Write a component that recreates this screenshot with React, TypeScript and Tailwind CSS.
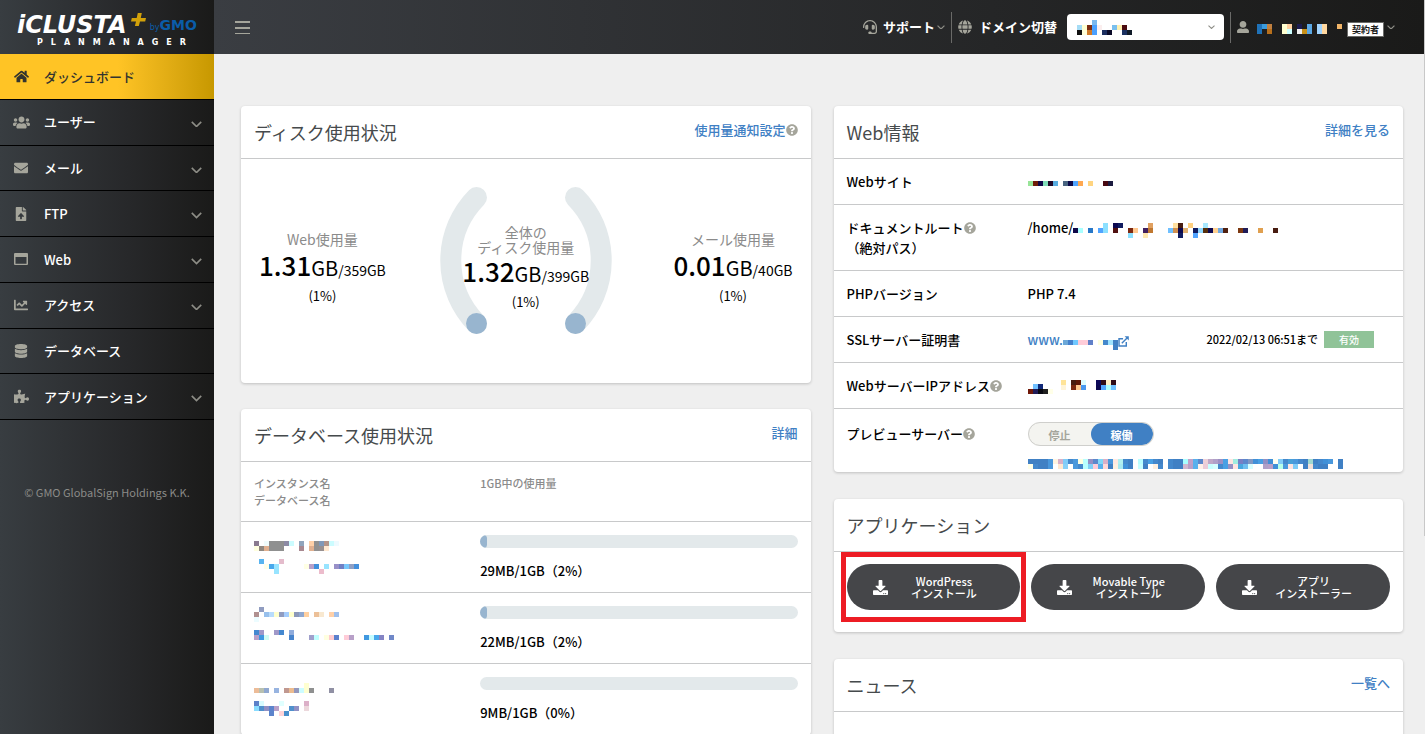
import { useState, type ReactNode } from 'react';
import type { IconType } from 'react-icons';
import {
  FaChartLine,
  FaDatabase,
  FaDownload,
  FaEnvelope,
  FaFileUpload,
  FaGlobe,
  FaHeadset,
  FaHome,
  FaPuzzlePiece,
  FaQuestionCircle,
  FaUserAlt,
  FaUsers,
} from 'react-icons/fa';

const CELL = 5;

// Masked value: each row is a list of hex colours, "-" leaves the cell empty
function Mosaic({ rows, className = '' }: { rows: string[]; className?: string }) {
  const grid = rows.map((row) => row.split(' '));
  const cols = Math.max(...grid.map((row) => row.length));

  return (
    <svg
      width={cols * CELL}
      height={grid.length * CELL}
      shapeRendering="crispEdges"
      className={`block shrink-0 ${className}`}
      aria-hidden="true"
    >
      {grid.map((row, y) =>
        row.map((color, x) =>
          color === '-' ? null : (
            <rect
              key={`${x}-${y}`}
              x={x * CELL}
              y={y * CELL}
              width={CELL}
              height={CELL}
              fill={`#${color}`}
            />
          )
        )
      )}
    </svg>
  );
}

function Chevron({ className = '' }: { className?: string }) {
  return (
    <svg
      viewBox="0 0 10 6"
      fill="none"
      stroke="currentColor"
      strokeWidth="1.5"
      className={`shrink-0 text-[#8d8d86] ${className}`}
      aria-hidden="true"
    >
      <path d="M0.7 0.8 L5 5 L9.3 0.8" />
    </svg>
  );
}

function WindowIcon({ className = '' }: { className?: string }) {
  return (
    <svg viewBox="0 0 14 12" className={className} fill="currentColor" aria-hidden="true">
      <path
        fillRule="evenodd"
        d="M1 0h12a1 1 0 0 1 1 1v10a1 1 0 0 1-1 1H1a1 1 0 0 1-1-1V1a1 1 0 0 1 1-1zm0.5 4v6.7h11V4z"
      />
    </svg>
  );
}

function ExternalIcon() {
  return (
    <svg
      width="11"
      height="11"
      viewBox="0 0 13 13"
      fill="none"
      stroke="currentColor"
      strokeWidth="1.7"
      className="shrink-0"
      aria-hidden="true"
    >
      <path d="M6 3.2H1.2v8.6h8.6V7" />
      <path d="M4.5 8.5 L11 2" />
      <path d="M7.8 0.2H12.8V5.2z" fill="currentColor" stroke="none" />
    </svg>
  );
}

function Help() {
  return <FaQuestionCircle className="size-3 shrink-0 text-[#a5a59b]" />;
}

function Logo() {
  return (
    <a href="#" className="flex h-[54px] shrink-0 flex-col pt-[13px] pl-[17px] text-white">
      <span className="flex h-6 items-end">
        <span className="font-['DejaVu_Sans'] text-[24px] leading-6 font-bold italic">
          iCLUSTA
        </span>
        <svg
          width="15"
          height="14"
          viewBox="0 0 15 14"
          className="mb-[10px] ml-1 shrink-0"
          aria-hidden="true"
        >
          <path d="M6.8 0h4l-1 5H15l-0.8 3.4H9L7.8 13H3.9l1.1-4.6H0L0.8 5h4.9z" fill="#d2a10a" />
        </svg>
        <span className="mb-[2px] ml-1 flex items-baseline font-['DejaVu_Sans'] text-[#0a5ca8]">
          <span className="text-[8px] leading-[14px]">by</span>
          <span className="text-[14px] leading-[14px] font-bold">GMO</span>
        </span>
      </span>
      <span className="mt-px mr-7 ml-5 flex justify-between font-['DejaVu_Sans'] text-[8px] leading-[10px] font-bold uppercase">
        {'PlanManager'.split('').map((letter, i) => (
          <span key={i}>{letter}</span>
        ))}
      </span>
    </a>
  );
}

type NavItem = {
  label: string;
  icon: IconType | typeof WindowIcon;
  iconClass: string;
  active?: boolean;
  expandable?: boolean;
};

const navItems: NavItem[] = [
  { label: 'ダッシュボード', icon: FaHome, iconClass: 'size-[15px]', active: true },
  { label: 'ユーザー', icon: FaUsers, iconClass: 'size-[17px]', expandable: true },
  { label: 'メール', icon: FaEnvelope, iconClass: 'size-[14px]', expandable: true },
  { label: 'FTP', icon: FaFileUpload, iconClass: 'size-[14px]', expandable: true },
  { label: 'Web', icon: WindowIcon, iconClass: 'h-3 w-[14px]', expandable: true },
  { label: 'アクセス', icon: FaChartLine, iconClass: 'size-[14px]', expandable: true },
  { label: 'データベース', icon: FaDatabase, iconClass: 'size-[14px]' },
  { label: 'アプリケーション', icon: FaPuzzlePiece, iconClass: 'size-[15px]', expandable: true },
];

function Sidebar() {
  return (
    <aside className="flex w-[214px] shrink-0 flex-col bg-linear-to-r from-[#383d41] via-[#27282a] via-60% to-[#1a1a19]">
      <Logo />
      <nav className="flex h-[366px] shrink-0 flex-col">
        {navItems.map(({ label, icon: Icon, iconClass, active, expandable }) => (
          <a
            key={label}
            href="#"
            className={`flex flex-1 items-center border-b border-black pr-3 text-[13px] font-medium ${
              active
                ? 'bg-linear-to-r from-[#ffc425] from-55% to-[#c79800] text-[#33342f]'
                : 'text-white'
            }`}
          >
            <span className="flex w-[42px] justify-center">
              <Icon className={`${iconClass} ${active ? '' : 'text-[#a5a59b]'}`} />
            </span>
            <span className="flex-1 pl-[2px]">{label}</span>
            {expandable && <Chevron className="mt-1 w-[11px]" />}
          </a>
        ))}
      </nav>
      <p className="mt-[63px] text-center text-[11px] leading-[18px] text-[#8b8b88]">
        © GMO GlobalSign Holdings K.K.
      </p>
    </aside>
  );
}

function TopBar() {
  return (
    <header className="flex h-[54px] shrink-0 items-center bg-linear-to-r from-[#3a3d42] to-[#1a1a19] pr-[29px] pl-[21px] text-[13px] font-bold text-white">
      <button aria-label="メニュー" className="flex flex-col gap-[4px]">
        <span className="h-[2px] w-[15px] bg-[#a5a59b]" />
        <span className="h-[2px] w-[15px] bg-[#a5a59b]" />
        <span className="h-px w-[15px] bg-[#a5a59b]" />
      </button>

      <button className="ml-auto flex items-center">
        <FaHeadset className="mr-[6px] size-[14px] text-[#a5a59b]" />
        サポート
        <Chevron className="ml-[2px] w-2" />
      </button>

      <div className="mx-[6px] h-[31px] w-px bg-[#6a6a68]" />

      <label htmlFor="domain" className="flex items-center">
        <FaGlobe className="mr-[7px] size-[14px] text-[#a5a59b]" />
        ドメイン切替
      </label>
      <div className="relative ml-[10px]">
        <select id="domain" className="block h-[26px] w-[157px] appearance-none rounded bg-white" />
        <Mosaic
          className="pointer-events-none absolute top-[6px] left-[10px]"
          rows={[
            '- - - 7ab8ee',
            'a5dcf5 ffffd0 7a2b10 4aa0ff fbeeee - - 7abfee fff0b0 4a0a10',
            '111111 ffffd8 d07a28 4aa0ff - 1c2e60 0a0a28 - - 1a3060 101a28',
          ]}
        />
        <Chevron className="pointer-events-none absolute top-[11px] right-[9px] w-[7px]" />
      </div>

      <div className="mx-[6px] h-[31px] w-px bg-[#6a6a68]" />

      <button className="flex items-center" aria-label="アカウント">
        <FaUserAlt className="mr-2 h-[14px] w-3 text-[#a5a59b]" />
        <Mosaic
          className="mt-1"
          rows={[
            '1f72b8 3a9bdc c08040 - - ffffd0 ffd0a0 - 1c1c50 - 5ba8e4 - a0d4ff ffd8a0 - - f0b468',
            '1f72b8 - b8701c - - ffffd0 ccffff - f0f0f0 c89018 5ba8e4 - a0d4ff ffd8a0',
          ]}
        />
        <span className="mt-1 mr-[3px] ml-[5px] border border-[#6a6a68] bg-white px-1 text-[9px] leading-[13px] text-[#1a1a19]">
          契約者
        </span>
        <Chevron className="w-2" />
      </button>
    </header>
  );
}

function Card({ title, action, children }: { title: string; action?: ReactNode; children?: ReactNode }) {
  return (
    <section className="rounded bg-white shadow-[0_1px_3px_rgba(0,0,0,0.2)]">
      <div className="flex h-[53px] items-center justify-between border-b border-[#c8c9ca] px-[13px]">
        <h2 className="text-[18px] text-[#464a4c]">{title}</h2>
        {action && (
          <div className="flex items-center pb-1 text-[13px] font-medium text-[#4080c4]">{action}</div>
        )}
      </div>
      {children}
    </section>
  );
}

function Usage({ label, used, total }: { label: ReactNode; used: string; total: string }) {
  return (
    <div className="text-center font-medium whitespace-nowrap text-black">
      <p className="text-[14px] font-normal text-[#8b8b8b]">{label}</p>
      <p className="leading-8">
        <span className="text-[26px]">{used}</span>
        <span className="text-[20px] font-normal">GB</span>
        <span className="text-[14px] font-normal">/{total}</span>
      </p>
      <p className="text-[13px] leading-5 font-normal">(1%)</p>
    </div>
  );
}

function DiskCard() {
  return (
    <Card
      title="ディスク使用状況"
      action={
        <>
          <a href="#">使用量通知設定</a>
          <Help />
        </>
      }
    >
      <div className="grid grid-cols-[1fr_172px_1fr] px-[18px] pt-7 pb-[49px]">
        <div className="flex justify-start pt-[42px] leading-5">
          <Usage label="Web使用量" used="1.31" total="359GB" />
        </div>
        <div className="grid justify-items-center">
          <svg
            width="172"
            height="147"
            viewBox="0 0 172 147"
            fill="none"
            strokeWidth="21"
            strokeLinecap="round"
            className="col-start-1 row-start-1"
            aria-hidden="true"
          >
            <path d="M36.5 10.5A90 90 0 0 0 36.5 136.5" stroke="#e3e9eb" />
            <path d="M135.5 10.5A90 90 0 0 1 135.5 136.5" stroke="#e3e9eb" />
            <circle cx="36.5" cy="136.5" r="10.5" fill="#98b5cf" />
            <circle cx="135.5" cy="136.5" r="10.5" fill="#98b5cf" />
          </svg>
          <div className="col-start-1 row-start-1 pt-[38px] leading-[15px]">
            <Usage
              label={
                <>
                  全体の
                  <br />
                  ディスク使用量
                </>
              }
              used="1.32"
              total="399GB"
            />
          </div>
        </div>
        <div className="flex justify-end pt-[42px] leading-5">
          <Usage label="メール使用量" used="0.01" total="40GB" />
        </div>
      </div>
    </Card>
  );
}

const databases = [
  {
    usage: '29MB/1GB（2%）',
    percent: 2,
    instance: [
      '8a7a90 - f0fcfc 8f9090 8f9090 8f9090 8c8aa4 ccfcff - 90a4bc - ffd0a8 909090 8098b8 b49488 ccfcff eefaff',
      'ffffe0 908880 e0b090 8f9090 8f9090 8f9090 - - - a88890 - e0b090 909090 989090 ffe8d0',
    ],
    name: [
      '- 58b4f0 - - - e4bccc',
      '- - ffffe8 48a8ec 98e4ff - - - - - ffffe4 b8a0c8 4090dc - 98e4ff - 9890c8 7080c4 78c8fc 90a0c4 4490dc',
      '- - - - 98e4ff - - - - - - - - ecbccc',
    ],
  },
  {
    usage: '22MB/1GB（2%）',
    percent: 2,
    instance: [
      '- 909cc0',
      'b09090 - 98c0ec b8dcfc ffffcc 909cc0 a4ccfc ffffcc 8c98b8 90a8d0 ffd0a0 - ecc098 f8e8d0 - ffd0a8 a0c0ec',
      'ecfcff',
    ],
    name: [
      '4488d0 a098c8 - - a098c8 4488d0 - 90acdc',
      'b8a0c8 4098e0 d0fcf4 - - - - 4884cc - - - a0a0cc c0ffff - ffffe0 ffccd0 5c80cc - ffccd8 b8a0c8 - - 4098e0 c4fcff 48a8ec 8484c4 - 7088c8',
    ],
  },
  {
    usage: '9MB/1GB（0%）',
    percent: 0,
    instance: [
      '- - - - - - - - - - ffffd0',
      'ecbc98 b8c0b0 90a8d0 - 98b4e0 - c09890 ecbc90 9498bc ccfcff ffffd0 8f9090 - - - 9090a4',
    ],
    name: [
      '5c80c8 d8fcff - - - e0ffff - - - - dcb0c8',
      '88dcff 5090cc 9090c4 5c84cc b8a0c8 - - 5090cc 9090c4 - ecd8dc',
      '- - - 5c84cc - ffd4d8 4890cc',
    ],
  },
];

function DatabaseCard() {
  return (
    <Card title="データベース使用状況" action={<a href="#">詳細</a>}>
      <table className="w-full text-left">
        <thead>
          <tr className="h-[59px] border-b border-[#c8c9ca] align-top text-[11px] leading-[17px] text-[#8b8b8b]">
            <th className="w-[42%] pt-[13px] pl-[13px] font-medium">
              インスタンス名
              <br />
              データベース名
            </th>
            <th className="pt-[13px] pr-[13px] font-medium">1GB中の使用量</th>
          </tr>
        </thead>
        <tbody>
          {databases.map((db) => (
            <tr key={db.usage} className="h-[71px] border-b border-[#c8c9ca] align-top">
              <td className="pt-[9px] pl-[13px]">
                <div className="flex flex-col gap-2">
                  <div className="flex h-5 items-end">
                    <Mosaic rows={db.instance} />
                  </div>
                  <Mosaic rows={db.name} />
                </div>
              </td>
              <td className="pt-[13px] pr-[13px]">
                <div className="h-[13px] overflow-hidden rounded-full bg-[#e3e9eb]">
                  <div className="h-full rounded-full bg-[#98b5cf]" style={{ width: `${db.percent}%` }} />
                </div>
                <p className="mt-[13px] text-[13px] leading-5 font-medium text-black">{db.usage}</p>
              </td>
            </tr>
          ))}
        </tbody>
      </table>
    </Card>
  );
}

function InfoRow({ label, children }: { label: ReactNode; children: ReactNode }) {
  return (
    <div className="flex border-b border-[#c8c9ca] pt-[13px] pb-3 text-[13px] leading-5 font-medium text-black">
      <dt className="w-[181px] shrink-0">{label}</dt>
      <dd className="flex flex-1 items-start">{children}</dd>
    </div>
  );
}

function PreviewToggle() {
  const [running, setRunning] = useState(true);
  const options = [
    { label: '停止', value: false },
    { label: '稼働', value: true },
  ];

  return (
    <fieldset
      className="flex h-6 w-[126px] overflow-hidden rounded-full border border-[#cfcfcc] bg-[#f4f4f0]"
      aria-label="プレビューサーバー"
    >
      {options.map(({ label, value }) => (
        <label
          key={label}
          className={`relative flex flex-1 cursor-pointer items-center justify-center rounded-full pt-[2px] text-[11px] font-bold ${
            running === value ? 'bg-[#4080c4] text-white' : 'text-[#a5a59b]'
          }`}
        >
          <input
            type="radio"
            name="preview"
            checked={running === value}
            onChange={() => setRunning(value)}
            className="sr-only"
          />
          {label}
        </label>
      ))}
    </fieldset>
  );
}

function WebCard() {
  return (
    <Card title="Web情報" action={<a href="#">詳細を見る</a>}>
      <dl className="[&>div]:pl-[13px]">
        <InfoRow label="Webサイト">
          <Mosaic
            className="mt-[9px]"
            rows={[
              '98e498 701c08 100848 80dcb8 200828 58ace0 - 486480 0c0848 50a4ff ffa850 - ffd480 - - 480810 1c1c40',
            ]}
          />
        </InfoRow>
        <InfoRow
          label={
            <>
              <span className="flex items-center">
                ドキュメントルート
                <Help />
              </span>
              （絶対パス）
            </>
          }
        >
          /home/
          <Mosaic
            className="mt-[5px]"
            rows={[
              '- - - - - - 8ce0ff - 0c0850 101c60 - - - - - e0a060 - - - - ffe0a0 481c10 - ffd080 - - a8e8ff',
              '100848 a8ffff - 2878c8 - 50a4ff 8ce0ff - 501010 - - 7c2810 ffc890 - 402060 c07830 - - - 70c0ff d09050 0c0850 e0b070 - 101c60 90d8ff 58300c 0c0850 ffd090 70a8e0 502010 - - 7c3810 201c58 - - e0a050 - - 481c10',
              '- - - - - - - - - - - 8ce0ff - - ffe8b0 - - - - - - 101c60 - - 50a4ff',
            ]}
          />
        </InfoRow>
        <InfoRow label="PHPバージョン">PHP 7.4</InfoRow>
        <InfoRow label="SSLサーバー証明書">
          <a href="#" className="flex items-start text-[#4080c4]">
            www.
            <Mosaic
              className="mt-[10px]"
              rows={[
                '6ca8d8 4480cc 70c8ff ffccd8 ffccd8 6080c8 - ffffe0 4488cc a0e4ff 4080c4',
                '- - - - - - - - - - 4080c4',
              ]}
            />
            <span className="mt-[6px]">
              <ExternalIcon />
            </span>
          </a>
          <span className="mr-[6px] ml-auto text-[11px] leading-[18px]">2022/02/13 06:51まで</span>
          <span className="mt-px mr-[29px] w-[50px] bg-[#90c398] text-center text-[10px] leading-[17px] text-white">
            有効
          </span>
        </InfoRow>
        <InfoRow
          label={
            <span className="flex items-center">
              WebサーバーIPアドレス
              <Help />
            </span>
          }
        >
          <Mosaic className="mt-2" rows={['- 70c0ff 102878', '701808 201c58 080810 202020 ffffe8']} />
          <Mosaic
            className="mt-1 ml-2"
            rows={[
              'ffe498 - 481c10 601808 dcfcff - - 0c0858 300c18 fff0c8 300c18',
              'fff4d8 - 7c2810 ffc890 4898f0 - - 0c0850 50a4ff b0ffff 70c0ff',
            ]}
          />
        </InfoRow>
        <div className="flex pt-[13px] pb-[3px] text-[13px] font-medium text-black">
          <dt className="flex h-6 w-[181px] shrink-0 items-center">
            プレビューサーバー
            <Help />
          </dt>
          <dd className="min-w-0 flex-1">
            <PreviewToggle />
            <Mosaic
              className="mt-[13px]"
              rows={[
                '4080c4 4080c4 4080c4 4080c4 4a98dc fff4e0 d8b0c8 80ccf8 4488cc 4a98dc ffffe0 b8ffff 9490c4 5c88cc 80d8f8 d8b0c8 4a98dc ffe8e0 b0f0f0 4488cc 4080c4 - b8ffff 4488cc 48a0e4 4488cc 4080c4 - 4488cc 4080c4 4080c4 a8ffff c0a0c8 58b0ec 5c88cc ecd0d8 c0a8c8 b0a0c8 9c90c4 48a0e4 ffe4e0 a0ece0 7880c4 5c88cc 8098c4 4090d8 48a0e4 9090c4 4090d8 fffff0 80ccf8 4488cc 48a0d8 4a98dc 4488cc 4080c4 a0d8d0 4080c4 4488cc 4090d8 4a98dc - 4080c4',
                'ffffe8 4488cc 4080c4 4080c4 4a98dc - ffe8d0 88d0f8 - 4a98dc 4488cc b8ffff 80d0f8 ffccd8 58b0ec ffd8d8 4080c4 fff0e0 a8e8f0 4090d8 4080c4 - c8ffff 4080c4 - fff0e0 4488cc - 4488cc 4080c4 4080c4 d0b8d0 b8a0c8 58b0ec fff0e8 ecccd8 c8ffff d8ffff 4488cc 48a0e4 9490c4 ffe4e0 48a8e0 70c0f0 d8ffff - - b0a0c8 b8a0c8 4090d8 b8ffe8 4a98dc ffe4e0 80ccf8 - 4080c4 f0e0d8 4488cc 4080c4 4080c4 - - 4080c4',
              ]}
            />
          </dd>
        </div>
      </dl>
    </Card>
  );
}

const installers = [
  { name: 'WordPress', action: 'インストール', highlighted: true },
  { name: 'Movable Type', action: 'インストール' },
  { name: 'アプリ', action: 'インストーラー' },
];

function ApplicationCard() {
  return (
    <Card title="アプリケーション">
      <div className="flex gap-[11px] px-[13px] pt-3 pb-[22px]">
        {installers.map(({ name, action, highlighted }) => (
          <div key={name} className="relative flex-1">
            <button className="flex h-[46px] w-full items-center rounded-full bg-[#454649] pr-5 pl-[26px] text-[11px] leading-3 font-medium text-white">
              <FaDownload className="size-[15px] shrink-0" />
              <span className="flex-1 text-center">
                <span className="block">{name}</span>
                <span className="block">{action}</span>
              </span>
            </button>
            {highlighted && (
              <div className="pointer-events-none absolute -inset-x-[6px] -inset-y-3 border-5 border-[#ed1c24]" />
            )}
          </div>
        ))}
      </div>
    </Card>
  );
}

export default function App() {
  return (
    <div className="flex h-screen overflow-hidden bg-[#efefef] font-['Noto_Sans_CJK_JP',sans-serif]">
      <Sidebar />
      <div className="flex min-w-0 flex-1 flex-col">
        <TopBar />
        <main className="grid grid-cols-2 items-start gap-[23px] pt-[52px] pr-[21px] pl-[27px]">
          <div className="flex flex-col gap-[26px]">
            <DiskCard />
            <DatabaseCard />
          </div>
          <div className="flex flex-col gap-[27px]">
            <WebCard />
            <ApplicationCard />
            <Card title="ニュース" action={<a href="#">一覧へ</a>}>
              <div className="h-40" />
            </Card>
          </div>
        </main>
      </div>
      {/* Edge of the scroll thumb */}
      <div className="h-[73vh] w-px shrink-0 bg-[#c8c8c8]" />
    </div>
  );
}
